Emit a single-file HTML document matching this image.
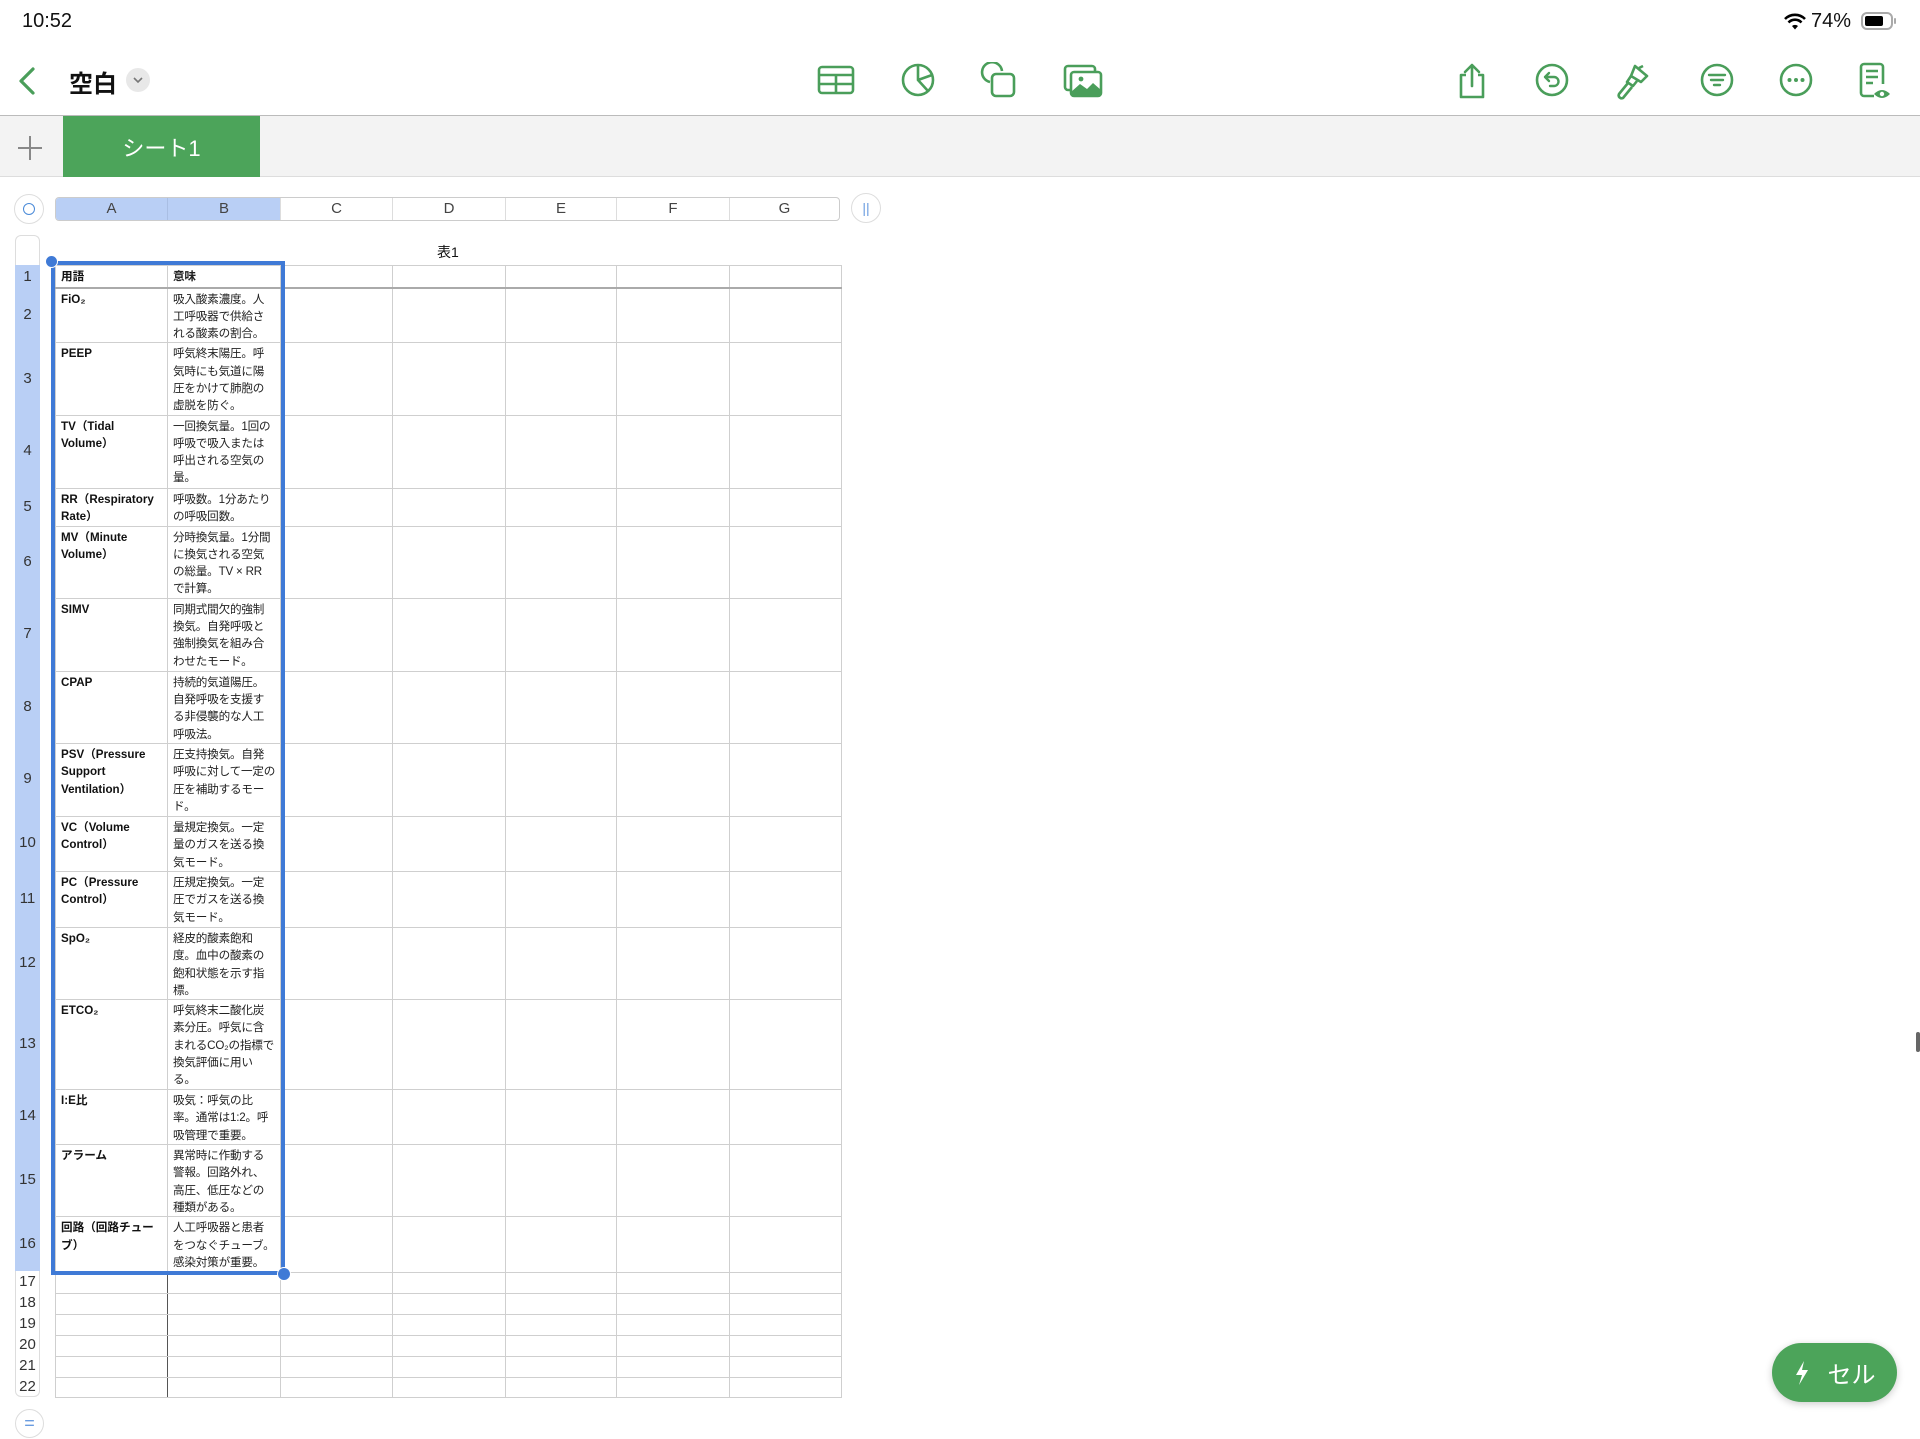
<!DOCTYPE html>
<html><head><meta charset="utf-8">
<style>
*{margin:0;padding:0;box-sizing:border-box}
body{width:1920px;height:1439px;background:#fff;position:relative;overflow:hidden;font-family:"Liberation Sans","Noto Sans CJK JP",sans-serif;color:#111}
.abs{position:absolute}
.ic{position:absolute;top:62px}
#grid{position:absolute;left:55px;top:265px;width:786px;border-collapse:collapse;table-layout:fixed}
#grid td{border:1px solid #cfcfcf;vertical-align:top;padding:2px 2px 0 5px;font-size:11.6px;line-height:17.3px;white-space:nowrap;overflow:hidden}
#grid td.a{font-weight:bold;color:#111}
#grid td.b{color:#222;letter-spacing:-0.2px}
#grid tr.h td{border-bottom:2px solid #aaa;font-weight:bold}
#grid tr.e td.a{border-right:1px solid #555}
.rh{position:absolute;left:15px;width:25px;text-align:center;font-size:15px;color:#333;display:flex;align-items:center;justify-content:center}
</style></head><body>

<div class="abs" style="left:22px;top:10px;font-size:20px;font-weight:500">10:52</div>
<svg class="abs" style="left:1783px;top:13px" width="24" height="18" viewBox="0 0 24 18"><path d="M2 6 A14 14 0 0 1 22 6" stroke="#000" stroke-width="2.6" fill="none"/><path d="M5.5 9.5 A9 9 0 0 1 18.5 9.5" stroke="#000" stroke-width="2.6" fill="none"/><path d="M9 13 A4.5 4.5 0 0 1 15 13 L12 16.5Z" fill="#000"/></svg>
<div class="abs" style="left:1811px;top:10px;font-size:20px">74%</div>
<div class="abs" style="left:1861px;top:12px;width:32px;height:18px;border:2px solid #aaa;border-radius:6px;padding:2px"><div style="width:18px;height:10px;background:#000;border-radius:2px"></div></div>
<div class="abs" style="left:1894px;top:18px;width:2px;height:6px;background:#aaa;border-radius:1px"></div>

<svg class="abs" style="left:16px;top:66px" width="22" height="30" viewBox="0 0 22 30"><path d="M17 3 L5 15 L17 27" stroke="#4a9e5a" stroke-width="3.2" fill="none" stroke-linecap="round" stroke-linejoin="round"/></svg>
<div class="abs" style="left:69px;top:64px;font-size:24px;font-weight:bold">空白</div>
<div class="abs" style="left:126px;top:68px;width:24px;height:24px;border-radius:12px;background:#e8e8e8"></div>
<svg class="abs" style="left:131px;top:74px" width="14" height="12"><path d="M3 4 L7 8 L11 4" stroke="#777" stroke-width="1.6" fill="none"/></svg>

<svg class="ic" style="left:817px" width="38" height="36" viewBox="0 0 38 36"><rect x="2" y="5" width="34" height="26" rx="3" fill="none" stroke="#4a9e5a" stroke-width="2.6"/><path d="M2 13H36M2 22H36M19 13V31" stroke="#4a9e5a" stroke-width="2.6"/></svg>
<svg class="ic" style="left:900px" width="36" height="36" viewBox="0 0 36 36"><circle cx="18" cy="18" r="15" fill="none" stroke="#4a9e5a" stroke-width="2.6"/><path d="M18 3V18L28 29M18 18L32 13" stroke="#4a9e5a" stroke-width="2.6" fill="none"/></svg>
<svg class="ic" style="left:980px" width="38" height="38" viewBox="0 0 38 38"><path d="M10 20 A10 10 0 1 1 22 9" fill="none" stroke="#4a9e5a" stroke-width="2.6"/><rect x="12" y="12" width="22" height="22" rx="4" fill="none" stroke="#4a9e5a" stroke-width="2.6"/></svg>
<svg class="ic" style="left:1063px" width="40" height="38" viewBox="0 0 40 38"><rect x="2" y="4" width="30" height="24" rx="3" fill="none" stroke="#4a9e5a" stroke-width="2.6"/><rect x="8" y="10" width="30" height="24" rx="3" fill="#fff" stroke="#4a9e5a" stroke-width="2.6"/><path d="M8 30 L17 22 L24 27 L30 21 L38 28 V34 H8Z" fill="#4a9e5a"/><circle cx="18" cy="17" r="2.4" fill="#4a9e5a"/></svg>

<svg class="ic" style="left:1456px" width="32" height="38" viewBox="0 0 32 38"><path d="M10 13H5V35H27V13H22" fill="none" stroke="#4a9e5a" stroke-width="2.6" stroke-linejoin="round"/><path d="M16 24V3M9 10L16 3L23 10" fill="none" stroke="#4a9e5a" stroke-width="2.6" stroke-linecap="round" stroke-linejoin="round"/></svg>
<svg class="ic" style="left:1535px" width="34" height="36" viewBox="0 0 34 36"><circle cx="17" cy="18" r="15" fill="none" stroke="#4a9e5a" stroke-width="2.6"/><path d="M14 11L10 15L14 19M10 15H19A4.5 4.5 0 0 1 19 24H15" fill="none" stroke="#4a9e5a" stroke-width="2.4" stroke-linecap="round" stroke-linejoin="round"/></svg>
<svg class="ic" style="left:1615px" width="36" height="40" viewBox="0 0 36 40"><path d="M20 4 L32 14 L26 20 L16 14 Z" fill="none" stroke="#4a9e5a" stroke-width="2.6" stroke-linejoin="round"/><path d="M24 6 L28 4 M16 14 L12 20 L18 24 L22 19" fill="none" stroke="#4a9e5a" stroke-width="2.6" stroke-linejoin="round"/><path d="M13 21 L4 32 A3 3 0 0 0 8 36 L17 25" fill="none" stroke="#4a9e5a" stroke-width="2.6" stroke-linejoin="round"/></svg>
<svg class="ic" style="left:1700px" width="34" height="36" viewBox="0 0 34 36"><circle cx="17" cy="18" r="15" fill="none" stroke="#4a9e5a" stroke-width="2.6"/><path d="M9 13H25M11 18H23M14 23H20" stroke="#4a9e5a" stroke-width="2.4" stroke-linecap="round"/></svg>
<svg class="ic" style="left:1779px" width="34" height="36" viewBox="0 0 34 36"><circle cx="17" cy="18" r="15" fill="none" stroke="#4a9e5a" stroke-width="2.6"/><circle cx="10.5" cy="18" r="2" fill="#4a9e5a"/><circle cx="17" cy="18" r="2" fill="#4a9e5a"/><circle cx="23.5" cy="18" r="2" fill="#4a9e5a"/></svg>
<svg class="ic" style="left:1858px" width="34" height="40" viewBox="0 0 34 40"><path d="M16 34H6A3 3 0 0 1 3 31V5A3 3 0 0 1 6 2H22A3 3 0 0 1 25 5V22" fill="none" stroke="#4a9e5a" stroke-width="2.6"/><path d="M8 9H20M8 15H20M8 21H15" stroke="#4a9e5a" stroke-width="2.4"/><path d="M16 32 Q24 24 32 32 Q24 40 16 32Z" fill="#4a9e5a"/><circle cx="24" cy="32" r="2.2" fill="#fff"/></svg>

<div class="abs" style="left:0;top:115px;width:1920px;height:1px;background:#bbb"></div>
<div class="abs" style="left:0;top:116px;width:1920px;height:61px;background:#f3f3f3;border-bottom:1px solid #ddd"></div>
<svg class="abs" style="left:16px;top:134px" width="28" height="28"><path d="M14 2V26M2 14H26" stroke="#888" stroke-width="2"/></svg>
<div class="abs" style="left:63px;top:116px;width:197px;height:61px;background:#4ca45a;color:#fff;font-size:22px;display:flex;align-items:center;justify-content:center">シート1</div>

<div class="abs" style="left:14px;top:194px;width:30px;height:30px;border-radius:15px;border:1px solid #ddd;background:#fff"></div>
<div class="abs" style="left:23px;top:203px;width:12px;height:12px;border-radius:6px;border:1.5px solid #4a8ad8"></div>
<div class="abs" style="left:851px;top:193px;width:30px;height:30px;border-radius:15px;border:1px solid #ddd;background:#fff;color:#6a9ce0;font-size:14px;text-align:center;line-height:28px">||</div>
<div class="abs" style="left:55px;top:197px;width:785px;height:24px;border:1px solid #ccc;border-radius:4px;overflow:hidden;display:flex;font-size:15px;color:#444">
<div style="width:112px;background:#b9cff5;border-right:1px solid #a9bee3;text-align:center;line-height:22px">A</div>
<div style="width:113px;background:#b9cff5;border-right:1px solid #ddd;text-align:center;line-height:22px">B</div>
<div style="width:112px;border-right:1px solid #ddd;text-align:center;line-height:22px">C</div>
<div style="width:113px;border-right:1px solid #ddd;text-align:center;line-height:22px">D</div>
<div style="width:111px;border-right:1px solid #ddd;text-align:center;line-height:22px">E</div>
<div style="width:113px;border-right:1px solid #ddd;text-align:center;line-height:22px">F</div>
<div style="flex:1;text-align:center;line-height:22px">G</div>
</div>
<div class="abs" style="left:437px;top:242px;font-size:14px">表1</div>

<div class="abs" style="left:15px;top:235px;width:25px;height:30px;border:1px solid #ddd;border-bottom:none;border-radius:6px 6px 0 0"></div>
<div class="abs" style="left:15px;top:265px;width:25px;height:1006px;background:#b9cff5"></div>
<div class="abs" style="left:15px;top:1271px;width:25px;height:126px;border:1px solid #ddd;border-top:none;border-radius:0 0 6px 6px"></div>
<div class="rh" style="top:265px;height:22px">1</div>
<div class="rh" style="top:287px;height:55px">2</div>
<div class="rh" style="top:342px;height:72px">3</div>
<div class="rh" style="top:414px;height:73px">4</div>
<div class="rh" style="top:487px;height:38px">5</div>
<div class="rh" style="top:525px;height:72px">6</div>
<div class="rh" style="top:597px;height:73px">7</div>
<div class="rh" style="top:670px;height:72px">8</div>
<div class="rh" style="top:742px;height:73px">9</div>
<div class="rh" style="top:815px;height:55px">10</div>
<div class="rh" style="top:870px;height:56px">11</div>
<div class="rh" style="top:926px;height:72px">12</div>
<div class="rh" style="top:998px;height:90px">13</div>
<div class="rh" style="top:1088px;height:55px">14</div>
<div class="rh" style="top:1143px;height:72px">15</div>
<div class="rh" style="top:1215px;height:56px">16</div>
<div class="rh" style="top:1271px;height:21px">17</div>
<div class="rh" style="top:1292px;height:21px">18</div>
<div class="rh" style="top:1313px;height:21px">19</div>
<div class="rh" style="top:1334px;height:21px">20</div>
<div class="rh" style="top:1355px;height:21px">21</div>
<div class="rh" style="top:1376px;height:20px">22</div>

<table id="grid">
<colgroup><col style="width:112px"><col style="width:113px"><col style="width:112px"><col style="width:113px"><col style="width:111px"><col style="width:113px"><col style="width:112px"></colgroup>
<tr class="h" style="height:22px"><td class="a">用語</td><td class="b" style="font-weight:bold">意味</td><td></td><td></td><td></td><td></td><td></td></tr>
<tr style="height:55px"><td class="a">FiO₂</td><td class="b">吸入酸素濃度。人<br>工呼吸器で供給さ<br>れる酸素の割合。</td><td></td><td></td><td></td><td></td><td></td></tr>
<tr style="height:72px"><td class="a">PEEP</td><td class="b">呼気終末陽圧。呼<br>気時にも気道に陽<br>圧をかけて肺胞の<br>虚脱を防ぐ。</td><td></td><td></td><td></td><td></td><td></td></tr>
<tr style="height:73px"><td class="a">TV（Tidal<br>Volume）</td><td class="b">一回換気量。1回の<br>呼吸で吸入または<br>呼出される空気の<br>量。</td><td></td><td></td><td></td><td></td><td></td></tr>
<tr style="height:38px"><td class="a">RR（Respiratory<br>Rate）</td><td class="b">呼吸数。1分あたり<br>の呼吸回数。</td><td></td><td></td><td></td><td></td><td></td></tr>
<tr style="height:72px"><td class="a">MV（Minute<br>Volume）</td><td class="b">分時換気量。1分間<br>に換気される空気<br>の総量。TV × RR<br>で計算。</td><td></td><td></td><td></td><td></td><td></td></tr>
<tr style="height:73px"><td class="a">SIMV</td><td class="b">同期式間欠的強制<br>換気。自発呼吸と<br>強制換気を組み合<br>わせたモード。</td><td></td><td></td><td></td><td></td><td></td></tr>
<tr style="height:72px"><td class="a">CPAP</td><td class="b">持続的気道陽圧。<br>自発呼吸を支援す<br>る非侵襲的な人工<br>呼吸法。</td><td></td><td></td><td></td><td></td><td></td></tr>
<tr style="height:73px"><td class="a">PSV（Pressure<br>Support<br>Ventilation）</td><td class="b">圧支持換気。自発<br>呼吸に対して一定の<br>圧を補助するモー<br>ド。</td><td></td><td></td><td></td><td></td><td></td></tr>
<tr style="height:55px"><td class="a">VC（Volume<br>Control）</td><td class="b">量規定換気。一定<br>量のガスを送る換<br>気モード。</td><td></td><td></td><td></td><td></td><td></td></tr>
<tr style="height:56px"><td class="a">PC（Pressure<br>Control）</td><td class="b">圧規定換気。一定<br>圧でガスを送る換<br>気モード。</td><td></td><td></td><td></td><td></td><td></td></tr>
<tr style="height:72px"><td class="a">SpO₂</td><td class="b">経皮的酸素飽和<br>度。血中の酸素の<br>飽和状態を示す指<br>標。</td><td></td><td></td><td></td><td></td><td></td></tr>
<tr style="height:90px"><td class="a">ETCO₂</td><td class="b">呼気終末二酸化炭<br>素分圧。呼気に含<br>まれるCO₂の指標で<br>換気評価に用い<br>る。</td><td></td><td></td><td></td><td></td><td></td></tr>
<tr style="height:55px"><td class="a">I:E比</td><td class="b">吸気：呼気の比<br>率。通常は1:2。呼<br>吸管理で重要。</td><td></td><td></td><td></td><td></td><td></td></tr>
<tr style="height:72px"><td class="a">アラーム</td><td class="b">異常時に作動する<br>警報。回路外れ、<br>高圧、低圧などの<br>種類がある。</td><td></td><td></td><td></td><td></td><td></td></tr>
<tr style="height:56px"><td class="a">回路（回路チュー<br>ブ）</td><td class="b">人工呼吸器と患者<br>をつなぐチューブ。<br>感染対策が重要。</td><td></td><td></td><td></td><td></td><td></td></tr>
<tr class="e" style="height:21px"><td class="a"></td><td></td><td></td><td></td><td></td><td></td><td></td></tr>
<tr class="e" style="height:21px"><td class="a"></td><td></td><td></td><td></td><td></td><td></td><td></td></tr>
<tr class="e" style="height:21px"><td class="a"></td><td></td><td></td><td></td><td></td><td></td><td></td></tr>
<tr class="e" style="height:21px"><td class="a"></td><td></td><td></td><td></td><td></td><td></td><td></td></tr>
<tr class="e" style="height:21px"><td class="a"></td><td></td><td></td><td></td><td></td><td></td><td></td></tr>
<tr class="e" style="height:20px"><td class="a"></td><td></td><td></td><td></td><td></td><td></td><td></td></tr>
</table>

<div class="abs" style="left:51px;top:261px;width:234px;height:1014px;border:4px solid #3f7ad6"></div>
<div class="abs" style="left:45px;top:255px;width:13px;height:13px;border-radius:7px;background:#3f7ad6;border:1.5px solid #fff"></div>
<div class="abs" style="left:277px;top:1267px;width:14px;height:14px;border-radius:7px;background:#3f7ad6;border:1.5px solid #fff"></div>

<div class="abs" style="left:15px;top:1409px;width:29px;height:29px;border-radius:15px;border:1px solid #ddd;color:#6a9ce0;text-align:center;line-height:26px;font-size:18px">=</div>
<div class="abs" style="left:1916px;top:1032px;width:4px;height:20px;background:#666;border-radius:2px"></div>
<div class="abs" style="left:1772px;top:1343px;width:125px;height:59px;border-radius:30px;background:#4ca45a;box-shadow:0 2px 8px rgba(0,0,0,.2);color:#fff;font-size:24px;display:flex;align-items:center;justify-content:center;gap:18px">
<svg width="16" height="26" viewBox="0 0 16 26"><path d="M10 1 L2 15 H8 L5 25 L14 10 H8 Z" fill="#fff"/></svg><span>セル</span></div>
</body></html>
